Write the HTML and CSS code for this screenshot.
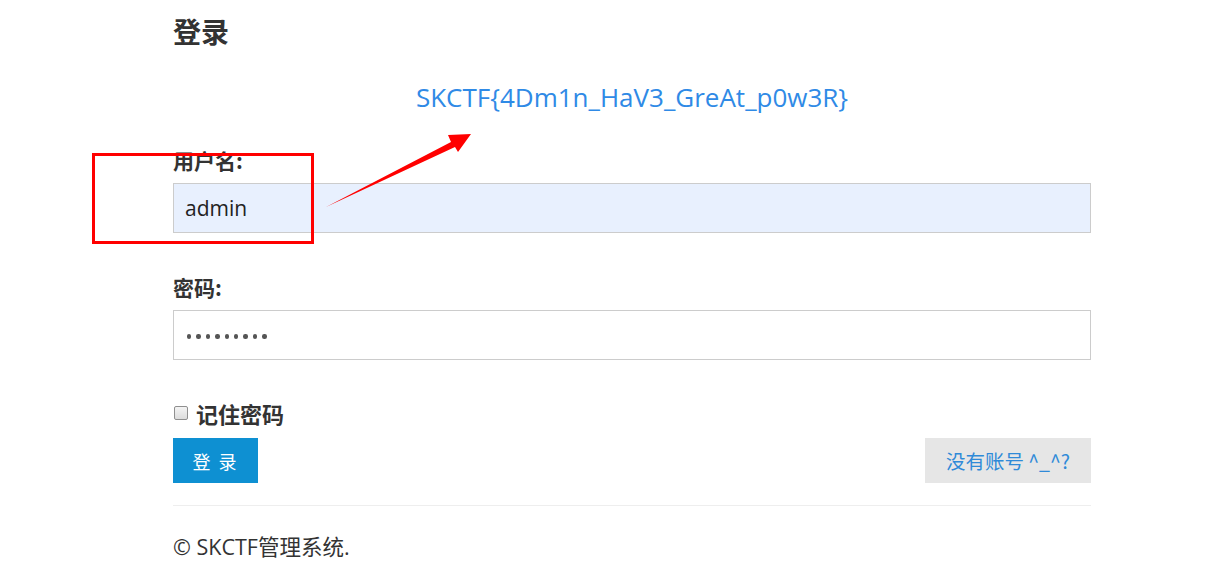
FILE: index.html
```html
<!DOCTYPE html>
<html lang="zh-CN">
<head>
<meta charset="utf-8">
<title>登录</title>
<link rel="stylesheet" href="styles.css">
</head>
<body>
<div class="page">
  <h2 class="title">登录</h2>
  <p class="flag">SKCTF{4Dm1n_HaV3_GreAt_p0w3R}</p>
  <form class="form">
    <label class="label">用户名:</label>
    <div class="input filled">admin</div>
    <label class="label label-pw">密码:</label>
    <div class="input pw" aria-label="password">
      <span class="dot"></span><span class="dot"></span><span class="dot"></span>
      <span class="dot"></span><span class="dot"></span><span class="dot"></span>
      <span class="dot"></span><span class="dot"></span><span class="dot"></span>
    </div>
    <div class="remember">
      <span class="check"></span>
      <span>记住密码</span>
    </div>
    <div class="actions">
      <button type="button" class="btn-login">登 录</button>
      <button type="button" class="btn-reg">没有账号 ^_^?</button>
    </div>
  </form>
  <hr class="rule">
  <p class="footer">© SKCTF管理系统.</p>
</div>
<div class="mark-box"></div>
<svg class="mark-arrow" width="1209" height="577" viewBox="0 0 1209 577">
  <polygon points="326,207 451,142 448,135 471,134 458,152 455,147" fill="#ff0000"/>
</svg>
</body>
</html>
```
FILE: styles.css
```css
html, body {
  margin: 0;
  padding: 0;
  background: #ffffff;
}
body {
  font-family: "Open Sans", "Noto Sans", "Noto Sans CJK SC", sans-serif;
  color: #333333;
  position: relative;
  width: 1209px;
  height: 577px;
  overflow: hidden;
}
.page {
  margin-left: 173px;
  width: 918px;
}
.title {
  margin: 16px 0 0;
  font-size: 28px;
  line-height: 30px;
  font-weight: bold;
  color: #333333;
  font-family: "Noto Sans CJK SC", sans-serif;
}
.flag {
  margin: 36px 0 0;
  text-align: center;
  font-size: 26px;
  line-height: 30px;
  color: #2f8ae6;
  font-family: "Open Sans", "Noto Sans", sans-serif;
}
.form {
  display: flex;
  flex-direction: column;
}
.label {
  display: block;
  margin-top: 36px;
  font-size: 21px;
  line-height: 24px;
  font-weight: bold;
  color: #333333;
  font-family: "Noto Sans CJK SC", sans-serif;
}
.label-pw {
  margin-top: 42px;
}
.input {
  margin-top: 11px;
  height: 50px;
  box-sizing: border-box;
  border: 1px solid #cccccc;
  padding: 0 11px;
  display: flex;
  align-items: center;
  font-size: 21px;
  color: #222222;
  background: #ffffff;
}
.filled {
  background: #e8f0fe;
}
.pw {
  padding-left: 13px;
  gap: 5px;
  padding-top: 3px;
}
.dot {
  width: 4.4px;
  height: 4.4px;
  border-radius: 50%;
  background: #555555;
}
.remember {
  margin-top: 40px;
  height: 26px;
  display: flex;
  align-items: center;
  gap: 8px;
  font-size: 22px;
  font-weight: bold;
  color: #333333;
  font-family: "Noto Sans CJK SC", sans-serif;
}
.check {
  width: 12px;
  height: 12px;
  margin-left: 1px;
  border: 1px solid #8f8f8f;
  border-radius: 2px;
  background: linear-gradient(#f4f4f4, #dcdcdc);
}
.actions {
  margin-top: 12px;
  display: flex;
  justify-content: space-between;
}
.btn-login {
  width: 85px;
  height: 45px;
  border: none;
  background: #0e90d2;
  color: #ffffff;
  font-size: 18px;
  font-family: "Noto Sans CJK SC", sans-serif;
  padding: 0;
  letter-spacing: 2px;
}
.btn-reg {
  width: 166px;
  height: 45px;
  border: none;
  background: #e6e6e6;
  color: #2f8ad8;
  font-size: 19.5px;
  font-family: "Noto Sans CJK SC", sans-serif;
  padding: 0;
}
.rule {
  margin: 22px 0 0;
  border: none;
  border-top: 1px solid #eeeeee;
  height: 0;
}
.footer {
  margin: 27px 0 0;
  font-size: 21.5px;
  line-height: 28px;
  color: #333333;
  font-family: "Open Sans", "Noto Sans CJK SC", sans-serif;
}
.mark-box {
  position: absolute;
  left: 92px;
  top: 153px;
  width: 216px;
  height: 85px;
  border: 3px solid #ff0000;
}
.mark-arrow {
  position: absolute;
  left: 0;
  top: 0;
  pointer-events: none;
}
```
